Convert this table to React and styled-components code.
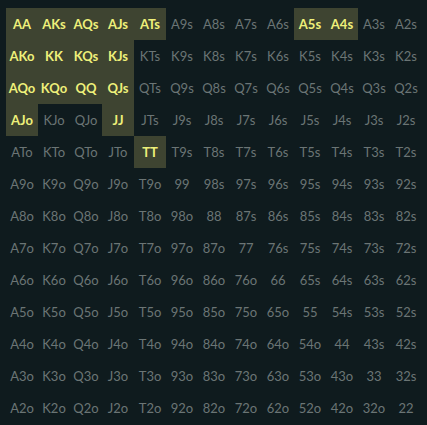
import React from "react";
import styled, { createGlobalStyle } from "styled-components";

const Global = createGlobalStyle`
  html, body { margin: 0; padding: 0; background: #0f1b1e; }
  body { font-family: Lato, "Open Sans", sans-serif; }
`;

const Page = styled.div`
  width: 427px;
  height: 425px;
  box-sizing: border-box;
  padding: 8px 5px 0 6px;
  background: #0f1b1e;
  overflow: hidden;
`;

const Grid = styled.div`
  display: grid;
  grid-template-columns: repeat(13, 32px);
  grid-auto-rows: 32px;
`;

const Cell = styled.div`
  display: flex;
  align-items: center;
  justify-content: center;
  font-size: 13px;
  white-space: nowrap;
  background: ${(p) => (p.$on ? "#3e4431" : "transparent")};
  color: ${(p) => (p.$on ? "#eef07a" : "#6b7575")};
  font-weight: ${(p) => (p.$on ? 700 : 400)};
`;

const RANKS = "AKQJT98765432".split("");
const SELECTED = new Set([
  "AA", "AKs", "AQs", "AJs", "ATs", "A5s", "A4s",
  "AKo", "KK", "KQs", "KJs",
  "AQo", "KQo", "QQ", "QJs",
  "AJo", "JJ",
  "TT",
]);

function label(i, j) {
  if (i === j) return RANKS[i] + RANKS[j];
  if (j > i) return RANKS[i] + RANKS[j] + "s";
  return RANKS[j] + RANKS[i] + "o";
}

export default function App() {
  const cells = [];
  for (let i = 0; i < 13; i++) {
    for (let j = 0; j < 13; j++) {
      const l = label(i, j);
      cells.push(
        <Cell key={l} $on={SELECTED.has(l)}>
          {l}
        </Cell>
      );
    }
  }
  return (
    <>
      <Global />
      <Page>
        <Grid>{cells}</Grid>
      </Page>
    </>
  );
}
